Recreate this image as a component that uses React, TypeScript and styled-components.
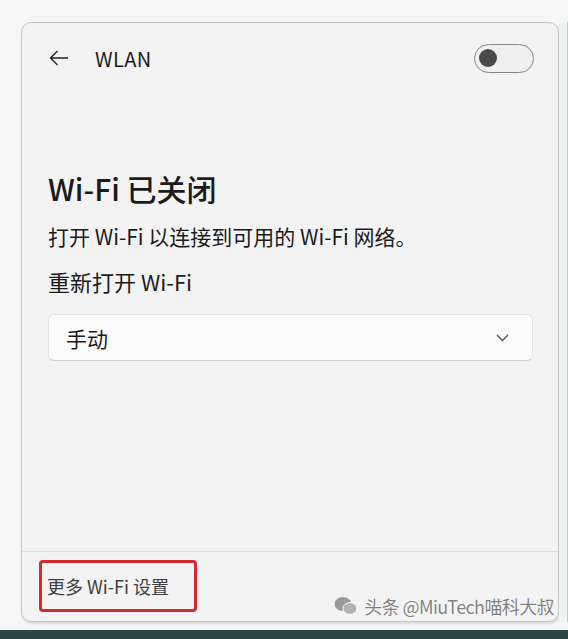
import React from 'react';
import styled, { createGlobalStyle } from 'styled-components';

const GlobalStyle = createGlobalStyle`
  html, body {
    margin: 0;
    padding: 0;
    background: #f6f6f6;
  }
  body {
    font-family: "Noto Sans CJK SC", "Noto Sans", sans-serif;
    color: #1b1b1b;
  }
`;

const Screen = styled.div`
  width: 568px;
  height: 639px;
  display: flex;
  flex-direction: column;
  overflow: hidden;
  position: relative;
`;

const Desk = styled.div`
  flex: 1;
  display: flex;
  padding: 22px 0 0 21px;
  box-sizing: border-box;
`;

const RightEdge = styled.div`
  width: 8px;
  border-right: 1px solid #c9cccc;
  background: #f1f2f2;
`;

const Panel = styled.div`
  width: 539px;
  height: 600px;
  box-sizing: border-box;
  background: #f3f3f3;
  border: 1px solid #c4c4c4;
  border-radius: 10px;
  box-shadow: 1px 2px 3px rgba(0, 0, 0, 0.12);
  display: flex;
  flex-direction: column;
  overflow: hidden;
`;

const Header = styled.div`
  height: 30px;
  margin-top: 20px;
  padding: 0 24px 0 26px;
  display: flex;
  align-items: center;
`;

const BackButton = styled.div`
  width: 22px;
  height: 22px;
  display: flex;
  align-items: center;
  justify-content: center;
  margin-right: 25px;
`;

const HeaderTitle = styled.div`
  font-size: 20px;
  flex: 1;
  letter-spacing: 0.4px;
`;

const Toggle = styled.div`
  width: 60px;
  height: 29px;
  box-sizing: border-box;
  border: 1.5px solid #858585;
  border-radius: 15px;
  background: #efefef;
  display: flex;
  align-items: center;
  padding-left: 4px;
`;

const Knob = styled.div`
  width: 18px;
  height: 18px;
  border-radius: 50%;
  background: #4a4a4a;
`;

const Body = styled.div`
  flex: 1;
  padding: 0 25px 0 26px;
  display: flex;
  flex-direction: column;
`;

const Title = styled.div`
  margin-top: 96px;
  font-size: 30px;
  font-weight: 500;
  line-height: 38px;
`;

const Text = styled.div<{ $top: number; $size: number }>`
  margin-top: ${(p) => p.$top}px;
  font-size: ${(p) => p.$size}px;
  line-height: 28px;
`;

const Select = styled.div`
  margin-top: 19px;
  height: 47px;
  box-sizing: border-box;
  background: #fbfbfb;
  border: 1px solid #e3e3e3;
  border-bottom-color: #cfcfcf;
  border-radius: 6px;
  display: flex;
  align-items: center;
  justify-content: space-between;
  padding: 0 23px 0 17px;
  font-size: 21px;
`;

const Divider = styled.div`
  height: 1px;
  background: #dedede;
`;

const Footer = styled.div`
  height: 69px;
  padding: 8px 0 0 17px;
  box-sizing: border-box;
  position: relative;
`;

const Marked = styled.div`
  width: 158px;
  height: 52px;
  box-sizing: border-box;
  border: 3px solid #d42b2b;
  border-radius: 4px;
  display: flex;
  align-items: center;
  padding-left: 5px;
  font-size: 18px;
  color: #404040;
`;

const Watermark = styled.div`
  position: absolute;
  right: 4px;
  bottom: 2px;
  display: flex;
  align-items: center;
  gap: 6px;
  font-size: 18px;
  color: rgba(105, 105, 105, 0.85);
  text-shadow: 0 0 1px #fff, 0 0 1px #fff;
  letter-spacing: -0.6px;
`;

const Taskbar = styled.div`
  height: 9px;
  margin-top: 8px;
  background: #2d4648;
`;

function ArrowLeft() {
  return (
    <svg width="20" height="16" viewBox="0 0 20 16" fill="none">
      <path d="M19 8H1.5M8.5 1L1.5 8L8.5 15" stroke="#222" strokeWidth="1.4" strokeLinejoin="round" />
    </svg>
  );
}

function Chevron() {
  return (
    <svg width="13" height="8" viewBox="0 0 13 8" fill="none">
      <path d="M1 1L6.5 6.5L12 1" stroke="#555" strokeWidth="1.4" />
    </svg>
  );
}

function WeChat() {
  return (
    <svg width="24" height="20" viewBox="0 0 24 20">
      <ellipse cx="9" cy="8" rx="8.5" ry="7" fill="#9a9a9a" />
      <ellipse cx="16" cy="12.5" rx="7" ry="6" fill="#b2b2b2" stroke="#fff" strokeWidth="1" />
    </svg>
  );
}

export default function App() {
  return (
    <Screen>
      <GlobalStyle />
      <Desk>
        <Panel>
          <Header>
            <BackButton>
              <ArrowLeft />
            </BackButton>
            <HeaderTitle>WLAN</HeaderTitle>
            <Toggle>
              <Knob />
            </Toggle>
          </Header>
          <Body>
            <Title>Wi-Fi 已关闭</Title>
            <Text $top={15} $size={21}>打开 Wi-Fi 以连接到可用的 Wi-Fi 网络。</Text>
            <Text $top={17} $size={22}>重新打开 Wi-Fi</Text>
            <Select>
              <span>手动</span>
              <Chevron />
            </Select>
          </Body>
          <Divider />
          <Footer>
            <Marked>更多 Wi-Fi 设置</Marked>
            <Watermark>
              <WeChat />
              头条 @MiuTech喵科大叔
            </Watermark>
          </Footer>
        </Panel>
        <RightEdge />
      </Desk>
      <Taskbar />
    </Screen>
  );
}
